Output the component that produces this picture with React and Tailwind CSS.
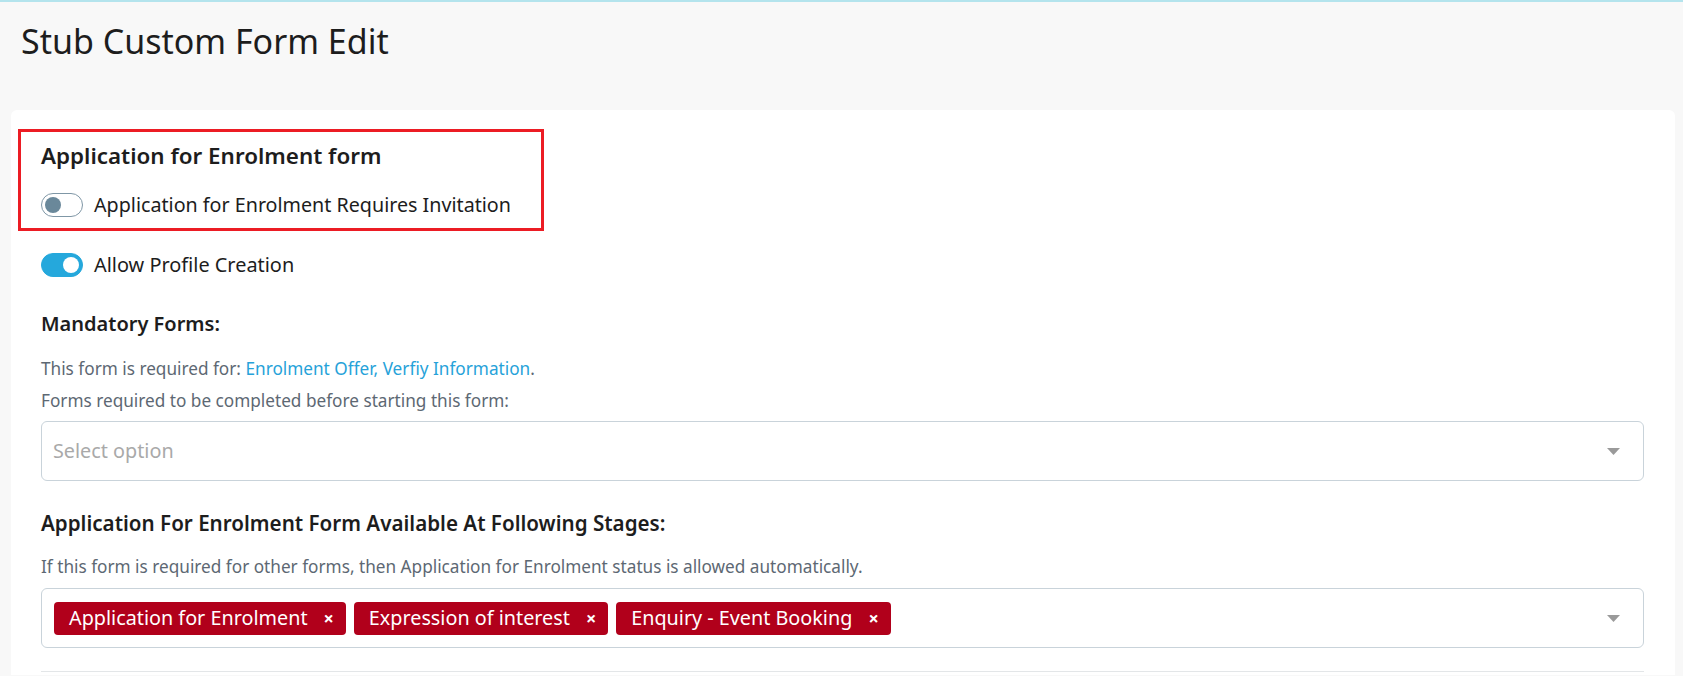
import { useState } from 'react'

const font = { fontFamily: '"Noto Sans", "Open Sans", sans-serif' }

function Toggle({ on, onChange }) {
  return (
    <button
      onClick={() => onChange(!on)}
      className={`relative flex h-[24px] w-[42px] shrink-0 items-center rounded-full border ${on ? 'border-[#25a8dc] bg-[#25a8dc]' : 'border-[#7f97a6] bg-white'}`}
    >
      <span className={`absolute top-[3px] h-[16px] w-[16px] rounded-full ${on ? 'left-[21px] bg-white' : 'left-[3px] bg-[#6a889a]'}`} />
    </button>
  )
}

function Caret() {
  return (
    <svg width="13" height="7" viewBox="0 0 13 7" className="shrink-0">
      <path d="M0 0h13L6.5 7z" fill="#9a9a9a" />
    </svg>
  )
}

function Tag({ label, onRemove }) {
  return (
    <span className="flex h-[33px] items-center gap-[16px] rounded-[4px] bg-[#b1001b] pl-[15px] pr-[12px] text-[19.8px] leading-none text-white">
      {label}
      <button onClick={onRemove} className="text-[18px] font-bold leading-none">×</button>
    </span>
  )
}

export default function App() {
  const [invite, setInvite] = useState(false)
  const [profile, setProfile] = useState(true)
  const [stages, setStages] = useState(['Application for Enrolment', 'Expression of interest', 'Enquiry - Event Booking'])

  return (
    <div style={font} className="min-h-[676px] border-t-2 border-[#b4e4ed] bg-[#f8f8f8] text-[#1d1d1d]">
      <h1 className="h-[108px] pl-[21px] pt-[13px] text-[34px] leading-[52px]">Stub Custom Form Edit</h1>

      <div className="ml-[11px] mr-[8px] rounded-t-[6px] bg-white pb-[3px] pl-[30px] pr-[31px] pt-[19px]">
        <div className="-ml-[23px] w-[526px] border-[3px] border-[#ec1c24] pb-[11px] pl-[20px] pt-[10px]">
          <h2 className="text-[22.4px] font-semibold leading-[28px]">Application for Enrolment form</h2>
          <div className="mt-[23px] flex items-center gap-[11px]">
            <Toggle on={invite} onChange={setInvite} />
            <span className="text-[19.7px] leading-[24px]">Application for Enrolment Requires Invitation</span>
          </div>
        </div>

        <div className="mt-[22px] flex items-center gap-[11px]">
          <Toggle on={profile} onChange={setProfile} />
          <span className="text-[19.9px] leading-[24px]">Allow Profile Creation</span>
        </div>

        <h3 className="mt-[35px] text-[20px] font-semibold leading-[24px]">Mandatory Forms:</h3>
        <p className="mt-[21px] text-[17.2px] leading-[24px] text-[#5d6873]">
          This form is required for: <a className="text-[#26a2d9]">Enrolment Offer, Verfiy Information</a>.
        </p>
        <p className="mt-[8px] text-[17.2px] leading-[24px] text-[#5d6873]">Forms required to be completed before starting this form:</p>
        <div className="mt-[8px] flex h-[60px] items-center justify-between rounded-[6px] border border-[#c9d3da] pl-[11px] pr-[23px]">
          <span className="text-[19.8px] text-[#a9a9a9]">Select option</span>
          <Caret />
        </div>

        <h3 className="mt-[30px] text-[20.6px] font-semibold leading-[24px]">Application For Enrolment Form Available At Following Stages:</h3>
        <p className="mt-[20px] text-[17.2px] leading-[24px] text-[#5d6873]">If this form is required for other forms, then Application for Enrolment status is allowed automatically.</p>
        <div className="mt-[9px] flex h-[60px] items-center justify-between rounded-[6px] border border-[#c9d3da] pl-[12px] pr-[23px]">
          <div className="flex gap-[8px]">
            {stages.map(s => (
              <Tag key={s} label={s} onRemove={() => setStages(stages.filter(x => x !== s))} />
            ))}
          </div>
          <Caret />
        </div>

        <div className="mt-[23px] border-t border-[#e3e6e8]" />
      </div>
    </div>
  )
}
